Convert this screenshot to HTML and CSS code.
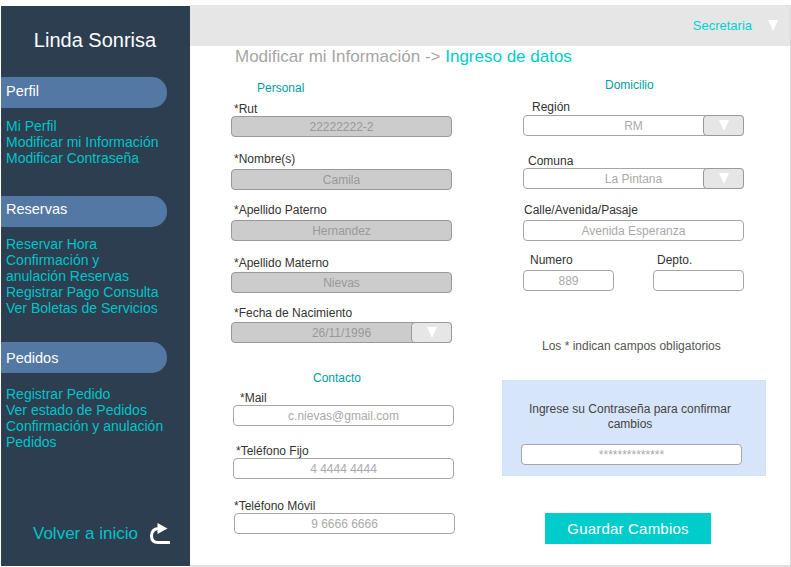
FILE: index.html
```html
<!DOCTYPE html>
<html lang="es">
<head>
    <meta charset="UTF-8">
    <title>Modificar mi Información</title>
    <link rel="stylesheet" href="styles.css">
</head>
<body>
    <div class="app">
        <!-- menu lateral -->
        <aside class="sidebar">
            <h1 class="brand">Linda Sonrisa</h1>

            <div class="pill">Perfil</div>
            <ul class="menu menu-perfil">
                <li>Mi Perfil</li>
                <li>Modificar mi Información</li>
                <li>Modificar Contraseña</li>
            </ul>

            <div class="pill pill-reservas">Reservas</div>
            <ul class="menu menu-reservas">
                <li>Reservar Hora</li>
                <li>Confirmación y<br>anulación Reservas</li>
                <li>Registrar Pago Consulta</li>
                <li>Ver Boletas de Servicios</li>
            </ul>

            <div class="pill pill-pedidos">Pedidos</div>
            <ul class="menu menu-pedidos">
                <li>Registrar Pedido</li>
                <li>Ver estado de Pedidos</li>
                <li>Confirmación y anulación<br>Pedidos</li>
            </ul>

            <div class="back">
                <span>Volver a inicio</span>
                <svg class="back-icon" width="23" height="23" viewBox="0 0 23 23">
                    <path d="M22 20.500H10Q3.500 20.500 3.500 14Q3.500 7 10.500 6.500" fill="none" stroke="#fff" stroke-width="3"/>
                    <path d="M9.500 1L19.500 6.500L9.500 12Z" fill="#fff"/>
                </svg>
            </div>
        </aside>

        <main class="main">
            <header class="topbar">
                <span class="user">Secretaria</span>
                <span class="arrow"></span>
            </header>

            <h2 class="page-title">Modificar mi Información -&gt; <span>Ingreso de datos</span></h2>

            <div class="columns">
                <!-- columna izquierda -->
                <section class="col col-left">
                    <h3 class="group group-personal">Personal</h3>

                    <div class="field f-rut">
                        <label>*Rut</label>
                        <div class="input locked">22222222-2</div>
                    </div>
                    <div class="field f-nombre">
                        <label>*Nombre(s)</label>
                        <div class="input locked">Camila</div>
                    </div>
                    <div class="field f-paterno">
                        <label>*Apellido Paterno</label>
                        <div class="input locked">Hernandez</div>
                    </div>
                    <div class="field f-materno">
                        <label>*Apellido Materno</label>
                        <div class="input locked">Nievas</div>
                    </div>
                    <div class="field f-fecha">
                        <label>*Fecha de Nacimiento</label>
                        <div class="input locked select">
                            <span class="value">26/11/1996</span>
                            <span class="select-btn"><span class="arrow"></span></span>
                        </div>
                    </div>

                    <h3 class="group group-contacto">Contacto</h3>

                    <div class="field f-mail">
                        <label>*Mail</label>
                        <div class="input">c.nievas@gmail.com</div>
                    </div>
                    <div class="field f-fijo">
                        <label>*Teléfono Fijo</label>
                        <div class="input">4 4444 4444</div>
                    </div>
                    <div class="field f-movil">
                        <label>*Teléfono Móvil</label>
                        <div class="input">9 6666 6666</div>
                    </div>
                </section>

                <!-- columna derecha -->
                <section class="col col-right">
                    <h3 class="group group-domicilio">Domicilio</h3>

                    <div class="field f-region">
                        <label>Región</label>
                        <div class="input select">
                            <span class="value">RM</span>
                            <span class="select-btn"><span class="arrow"></span></span>
                        </div>
                    </div>
                    <div class="field f-comuna">
                        <label>Comuna</label>
                        <div class="input select">
                            <span class="value">La Pintana</span>
                            <span class="select-btn"><span class="arrow"></span></span>
                        </div>
                    </div>
                    <div class="field f-calle">
                        <label>Calle/Avenida/Pasaje</label>
                        <div class="input">Avenida Esperanza</div>
                    </div>

                    <div class="field-row">
                        <div class="field f-numero">
                            <label>Numero</label>
                            <div class="input">889</div>
                        </div>
                        <div class="field f-depto">
                            <label>Depto.</label>
                            <div class="input"></div>
                        </div>
                    </div>

                    <p class="note">Los * indican campos obligatorios</p>

                    <div class="confirm">
                        <p>Ingrese su Contraseña para confirmar cambios</p>
                        <div class="input">**************</div>
                    </div>

                    <button class="save">Guardar Cambios</button>
                </section>
            </div>
        </main>
    </div>
</body>
</html>
```

FILE: styles.css
```css
* {
    margin: 0;
    padding: 0;
    box-sizing: border-box;
}

body {
    font-family: "Liberation Sans", Arial, sans-serif;
    background-color: #fff;
    overflow: hidden;
}

.app {
    display: flex;
    width: 791px;
    height: 567px;
    padding: 5px 0 0 1px;
}

/* menu lateral */
.sidebar {
    width: 189px;
    height: 560px;
    margin-top: 1px;
    display: flex;
    flex-direction: column;
    background-color: #2c3e50;
}

.brand {
    margin: 21px 1px 24px 0;
    font-size: 20px;
    line-height: 26px;
    font-weight: normal;
    text-align: center;
    color: #fff;
}

.pill {
    width: 166px;
    height: 31px;
    padding-left: 5px;
    font-size: 14.5px;
    line-height: 28px;
    color: #fff;
    background-color: #5278a3;
    border-radius: 0 15px 15px 0;
}

.pill-reservas {
    line-height: 26px;
}

.pill-pedidos {
    line-height: 32px;
}

.menu {
    padding-left: 5px;
    list-style: none;
    font-size: 14px;
    line-height: 16px;
    color: #00c4c9;
}

.menu-perfil {
    margin: 10px 0 30px;
}

.menu-reservas {
    margin: 9px 0 26px;
}

.menu-pedidos {
    margin-top: 13px;
}

.back {
    display: flex;
    align-items: center;
    margin-top: auto;
    padding: 0 0 21px 32px;
    font-size: 17px;
    color: #00c4c9;
}

.back-icon {
    margin-left: 10px;
}

/* parte derecha */
.main {
    flex: 1;
    height: 562px;
    border-right: 1px solid #d9d9d9;
    border-bottom: 2px solid #e0e0e0;
}

.topbar {
    display: flex;
    align-items: center;
    justify-content: flex-end;
    height: 41px;
    padding: 0 12px 0 0;
    background-color: #e6e6e6;
}

.user {
    margin-right: 16px;
    font-size: 13px;
    color: #00d2d3;
}

.arrow {
    display: block;
    width: 0;
    height: 0;
    border-left: 5.500px solid transparent;
    border-right: 5.500px solid transparent;
    border-top: 11px solid #fff;
}

.page-title {
    margin: 1px 0 0 45px;
    font-size: 17px;
    line-height: 20px;
    font-weight: normal;
    color: #a6a6a6;
}

.page-title span {
    color: #00cccc;
}

.columns {
    display: flex;
}

.col {
    display: flex;
    flex-direction: column;
}

.col-left {
    width: 312px;
}

.col-right {
    width: 288px;
}

.group {
    font-size: 12px;
    line-height: 14px;
    font-weight: normal;
    color: #00a0a0;
}

.group-personal {
    margin: 14px 0 0 67px;
}

.group-contacto {
    margin: 28px 0 0 123px;
}

.group-domicilio {
    margin: 11px 0 0 103px;
}

.field label {
    display: block;
    font-size: 12px;
    line-height: 16px;
    color: #333;
}

.input {
    width: 221px;
    height: 21px;
    font-size: 12px;
    line-height: 20px;
    text-align: center;
    color: #aaa;
    background-color: #fff;
    border: 1px solid #a6a6a6;
    border-radius: 4px;
}

.locked {
    color: #999;
    background-color: #ccc;
    border-color: #999;
}

.select {
    display: flex;
}

.select .value {
    flex: 1;
    padding-left: 40px;
}

.select-btn {
    display: flex;
    align-items: center;
    justify-content: center;
    width: 41px;
    margin: -1px -1px -1px 0;
    background-color: #e6e6e6;
    border: 1px solid #999;
    border-radius: 4px;
}

/* posiciones de cada campo */
.f-rut {
    margin: 6px 0 0 41px;
}

.f-rut label {
    margin-bottom: -1px;
    padding-left: 3px;
}

.f-nombre,
.f-paterno,
.f-materno,
.f-fecha {
    margin-left: 41px;
}

.f-nombre {
    margin-top: 14px;
}

.f-paterno {
    margin-top: 12px;
}

.f-materno {
    margin-top: 14px;
}

.f-fecha {
    margin-top: 12px;
}

.f-nombre label,
.f-paterno label {
    padding: 0 0 2px 3px;
}

.f-materno label,
.f-fecha label {
    padding: 0 0 1px 3px;
}

.f-mail {
    margin: 5px 0 0 43px;
}

.f-mail label {
    margin-bottom: -1px;
    padding-left: 7px;
}

.f-fijo {
    margin: 17px 0 0 43px;
}

.f-fijo label {
    margin-bottom: -1px;
    padding-left: 3px;
}

.f-movil {
    margin: 19px 0 0 44px;
}

.f-movil label {
    margin-bottom: -1px;
}

.f-region {
    margin: 7px 0 0 21px;
}

.f-region label {
    padding-left: 9px;
}

.f-comuna {
    margin: 17px 0 0 21px;
}

.f-comuna label {
    margin-bottom: -1px;
    padding-left: 5px;
}

.f-calle {
    margin: 13px 0 0 21px;
}

.f-calle label {
    padding: 0 0 2px 1px;
}

.field-row {
    display: flex;
    gap: 39px;
    margin: 11px 0 0 21px;
}

.field-row .input {
    width: 91px;
}

.f-numero label {
    padding: 0 0 2px 7px;
}

.f-depto label {
    padding: 0 0 2px 4px;
}

.note {
    margin: 48px 0 0 40px;
    font-size: 12px;
    line-height: 14px;
    color: #555;
}

.confirm {
    width: 264px;
    height: 96px;
    margin: 27px 0 0;
    padding: 21px 18px 0;
    font-size: 12px;
    line-height: 15px;
    text-align: center;
    color: #444;
    background-color: #d6e5fa;
    border: 1px solid #cfe2fb;
}

.confirm p {
    padding-right: 8px;
}

.confirm .input {
    margin-top: 12px;
}

.save {
    width: 166px;
    height: 31px;
    margin: 37px 0 0 43px;
    font-family: inherit;
    font-size: 15px;
    letter-spacing: 0.200px;
    color: #fff;
    background-color: #00cccc;
    border: none;
}
```
